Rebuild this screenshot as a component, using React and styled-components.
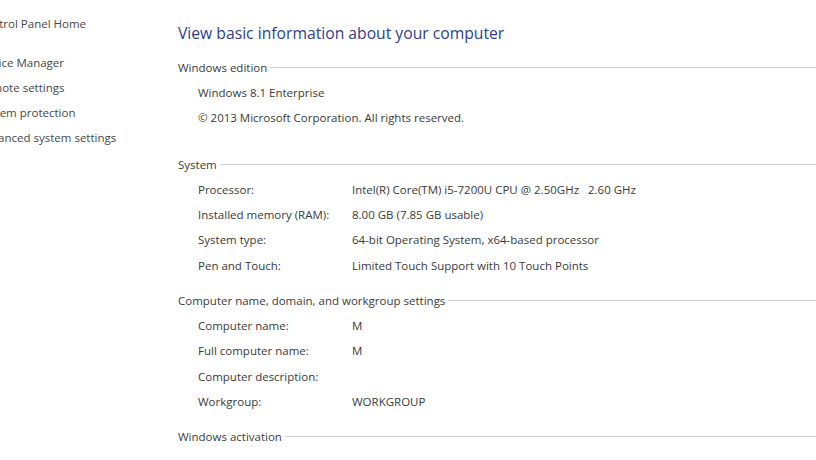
import React from 'react'
import styled, { createGlobalStyle } from 'styled-components'

const GlobalStyle = createGlobalStyle`
  html, body {
    margin: 0;
    padding: 0;
    background: #fff;
    overflow: hidden;
  }
  body {
    font-family: "Open Sans", "Noto Sans", sans-serif;
    color: #3a3a3a;
  }
`

const SIDEBAR_LINKS = [
  'Device Manager',
  'Remote settings',
  'System protection',
  'Advanced system settings',
]

const SECTIONS = [
  {
    title: 'Windows edition',
    plain: true,
    extra: 11,
    rows: [
      ['Windows 8.1 Enterprise'],
      ['© 2013 Microsoft Corporation. All rights reserved.'],
    ],
  },
  {
    title: 'System',
    rows: [
      ['Processor:', 'Intel(R) Core(TM) i5-7200U CPU @ 2.50GHz   2.60 GHz'],
      ['Installed memory (RAM):', '8.00 GB (7.85 GB usable)'],
      ['System type:', '64-bit Operating System, x64-based processor'],
      ['Pen and Touch:', 'Limited Touch Support with 10 Touch Points'],
    ],
  },
  {
    title: 'Computer name, domain, and workgroup settings',
    rows: [
      ['Computer name:', 'M'],
      ['Full computer name:', 'M'],
      ['Computer description:', ''],
      ['Workgroup:', 'WORKGROUP'],
    ],
  },
  {
    title: 'Windows activation',
    rows: [],
  },
]

const Page = styled.div`
  display: flex;
  width: 816px;
  height: 460px;
`

const Sidebar = styled.nav`
  width: 200px;
  margin-left: -22px;
  flex-shrink: 0;
  display: flex;
  flex-direction: column;
  padding-top: 11px;
`

const SideLink = styled.div`
  font-size: 11.5px;
  line-height: 25px;
  height: 25px;
  color: #474747;
  white-space: nowrap;
  margin-bottom: ${({ gap }) => gap || 0}px;
`

const Main = styled.main`
  flex: 1;
  display: flex;
  flex-direction: column;
  padding-top: 21px;
  min-width: 0;
`

const Title = styled.h1`
  margin: 0 0 10px;
  font-size: 15.7px;
  font-weight: 400;
  line-height: 24px;
  color: #2a3f8c;
  white-space: nowrap;
`

const Section = styled.section`
  display: flex;
  flex-direction: column;
  margin-bottom: ${({ extra }) => 10 + (extra || 0)}px;
`

const Header = styled.div`
  display: flex;
  align-items: center;
  height: 25px;
  font-size: 11.5px;
  color: #3c3c3c;
  white-space: nowrap;

  &::after {
    content: '';
    flex: 1;
    height: 1px;
    margin-left: 3px;
    background: #d2d2d2;
  }
`

const Row = styled.div`
  display: flex;
  align-items: center;
  height: 25.3px;
  padding-left: 20px;
  font-size: 11.5px;
  white-space: pre;
`

const Label = styled.div`
  width: 154px;
  flex-shrink: 0;
`

const Value = styled.div``

export default function App() {
  return (
    <>
      <GlobalStyle />
      <Page>
        <Sidebar>
          <SideLink gap={14}>Control Panel Home</SideLink>
          {SIDEBAR_LINKS.map((l) => (
            <SideLink key={l}>{l}</SideLink>
          ))}
        </Sidebar>
        <Main>
          <Title>View basic information about your computer</Title>
          {SECTIONS.map((s) => (
            <Section key={s.title} extra={s.extra}>
              <Header>{s.title}</Header>
              {s.rows.map((r, i) => (
                <Row key={i}>
                  {s.plain ? (
                    <Value>{r[0]}</Value>
                  ) : (
                    <>
                      <Label>{r[0]}</Label>
                      <Value>{r[1]}</Value>
                    </>
                  )}
                </Row>
              ))}
            </Section>
          ))}
        </Main>
      </Page>
    </>
  )
}
